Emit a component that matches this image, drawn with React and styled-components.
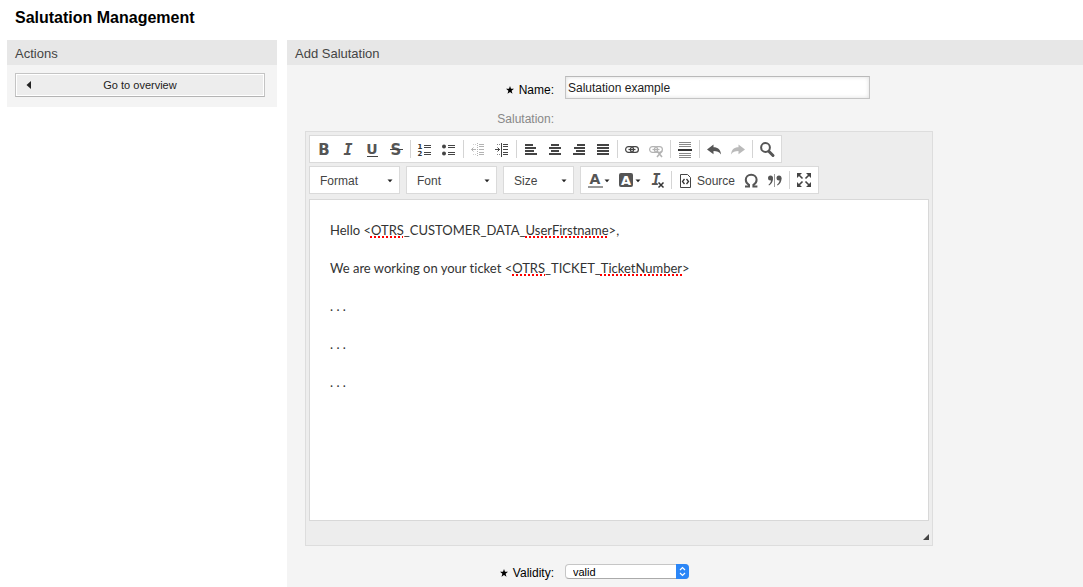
import React from "react";
import styled, { createGlobalStyle, css } from "styled-components";

const GlobalStyle = createGlobalStyle`
  *, *::before, *::after { box-sizing: border-box; }
  body {
    margin: 0;
    background: #fff;
    color: #000;
    font: 12px/16px "Liberation Sans", Arial, sans-serif;
  }
  button, input, select { font: inherit; color: inherit; margin: 0; }
`;

const Page = styled.div`
  min-height: 100vh;
  padding: 8px 0 0 7px;
  display: flex;
  flex-direction: column;
`;

const Title = styled.h1`
  margin: 0;
  padding: 0 8px;
  height: 32px;
  font-size: 16px;
  line-height: 20px;
  font-weight: bold;
`;

const Columns = styled.div`
  flex: 1;
  display: flex;
  align-items: stretch;
  gap: 10px;
`;

const Sidebar = styled.aside`
  flex: 0 0 270px;
`;

const Main = styled.main`
  flex: 1;
  min-width: 0;
  background: #f4f4f4;
`;

const PanelTitle = styled.h2`
  margin: 0;
  padding: 3px 8px 0;
  background: #e7e7e7;
  color: #444;
  font-size: 13px;
  line-height: 22px;
  font-weight: normal;
`;

const ActionBox = styled.div`
  padding: 8px 12px 10px 8px;
  background: #f4f4f4;
`;

const ActionButton = styled.button`
  display: flex;
  align-items: center;
  width: 100%;
  height: 24px;
  padding: 0 10px;
  border: 1px solid #c4c4c4;
  border-bottom-color: #b4b4b4;
  background: #ededed;
  box-shadow: inset 0 0 0 1px #fff;
  color: #222;
  font-size: 11px;

  svg { margin-right: -6px; }
  span { flex: 1; }
`;

const Form = styled.form`
  padding: 11px 18px 8px 0;
`;

const Row = styled.div`
  display: grid;
  grid-template-columns: 267px minmax(0, 305px);
  column-gap: 11px;
  align-items: ${(p) => p.$align || "center"};
  min-height: ${(p) => p.$height}px;
`;

const Label = styled.label`
  display: flex;
  justify-content: flex-end;
  align-items: center;
  gap: 5px;
  padding-top: ${(p) => p.$drop || 0}px;
  color: ${(p) => (p.$muted ? "#888" : "#000")};
`;

const TextInput = styled.input`
  width: 100%;
  height: 23px;
  padding: 0 2px;
  border: 1px solid #c4c4c4;
  border-top-color: #b9b9b9;
  background: #fff;
  box-shadow: inset 0 0 4px #ddd;
  color: #222;
`;

const SelectBox = styled.span`
  position: relative;
  display: block;
  width: 124px;

  svg {
    position: absolute;
    top: 0;
    right: 0;
    pointer-events: none;
  }
`;

const Select = styled.select`
  display: block;
  width: 100%;
  height: 15px;
  padding: 0 16px 0 7px;
  appearance: none;
  border: 1px solid #c6c6c6;
  border-bottom-color: #aaa;
  border-radius: 4px;
  background: #fff;
  font-size: 11px;
  line-height: 12px;
`;

const Editor = styled.section`
  max-width: 628px;
  margin: 2px 0 18px 18px;
  padding: 3px;
  border: 1px solid #ddd;
  background: #ededed;
`;

const ToolRow = styled.div`
  display: flex;
  flex-wrap: wrap;
  gap: 6px;
  margin-bottom: ${(p) => (p.$last ? 5 : 3)}px;
`;

const ToolGroup = styled.div`
  display: flex;
  align-items: center;
  height: 28px;
  padding: 0 2px;
  border: 1px solid #dadada;
  background: #fff;
`;

const ToolButton = styled.button`
  display: flex;
  align-items: center;
  gap: ${(p) => (p.$wide ? 3 : 1)}px;
  height: 24px;
  padding: 1px 4px 0;
  border: 0;
  background: none;
  color: #444;

  ${(p) => p.disabled && css`opacity: 0.4;`}
`;

const Separator = styled.span`
  width: 1px;
  height: 18px;
  margin: 0 2px;
  background: #d4d4d4;
`;

const Combo = styled.button`
  display: flex;
  align-items: center;
  justify-content: space-between;
  width: ${(p) => p.$width}px;
  height: 28px;
  padding: 1px 6px 0 10px;
  border: 1px solid #dadada;
  background: #fff;
  color: #444;
`;

const Content = styled.div`
  height: 322px;
  padding: 21px 20px;
  border: 1px solid #d8d8d8;
  background: #fff;
  color: #333;
  font: 13px/19px Lato, sans-serif;
  font-variant-ligatures: none;
  outline: none;

  p { margin: 0 0 19px; }
`;

const Misspelled = styled.span`
  text-decoration: underline dotted #f00 2px;
  text-decoration-skip-ink: none;
  text-underline-offset: 1px;
`;

const EditorFooter = styled.div`
  display: flex;
  justify-content: flex-end;
  align-items: flex-end;
  height: 21px;
  padding-bottom: 2px;
`;

const Icon = styled.svg`
  flex: none;
  overflow: visible;
`;

const Glyph = ({ children }) => (
  <Icon width="16" height="16" viewBox="0 0 16 16" fill="#444" aria-hidden="true">
    {children}
  </Icon>
);

const Letter = ({ children, x = 8, y = 13, size = 15, color = "#555", italic, family = "DejaVu Sans" }) => (
  <text
    x={x}
    y={y}
    fontSize={size}
    fontWeight="bold"
    fontStyle={italic ? "italic" : "normal"}
    fontFamily={`"${family}", sans-serif`}
    textAnchor="middle"
    fill={color}
  >
    {children}
  </text>
);

const Lines = ({ rows, h = 2 }) => rows.map(([x, y, w]) => <rect key={y} x={x} y={y} width={w} height={h} />);

const Caret = () => (
  <Icon width="6" height="16" viewBox="0 0 6 16" aria-hidden="true">
    <path d="M0.500 6.500h5L3 9.300z" fill="#222" />
  </Icon>
);

const Star = () => (
  <svg width="8" height="8" viewBox="0 0 8 8" aria-hidden="true">
    <path d="M4 0l1 2.800h3L5.600 4.700l.9 3.100L4 6 1.500 7.800l.9-3.100L0 2.800h3z" />
  </svg>
);

const ChainShape = () => (
  <g fill="none" stroke="#444" strokeWidth="1.200">
    <rect x="1.600" y="4.600" width="8" height="5.800" rx="2.900" />
    <rect x="6.400" y="4.600" width="8" height="5.800" rx="2.900" />
    <path d="M4.500 7.500h7" />
  </g>
);

const ArrowBack = () => <path d="M1 7.500L7.500 2.500v2.800c4.500 0 7 2.200 7.500 7.200-1.800-2.500-4-3.400-7.500-3.400v3.200z" fill="#555" />;

const IndentShape = ({ out }) => (
  <>
    <Lines h={1} rows={[[9, 2, 5], [9, 4, 5], [9, 7, 5], [9, 10, 5], [9, 12, 5]]} />
    <path d="M7.500 1v14" stroke="#444" strokeDasharray={out ? "1 1" : "none"} />
    <path d="M3 2.500h3M3 12.500h3" stroke="#888" strokeDasharray="1 1" />
    <path d={out ? "M6 7.500H1.500M3.500 5.500l-2 2 2 2" : "M1 7.500h5M3.500 5.500l2 2-2 2"} fill="none" stroke="#444" />
  </>
);

const icons = {
  bold: <Letter>B</Letter>,
  italic: <Letter italic family="DejaVu Sans Mono">I</Letter>,
  underline: (
    <>
      <Letter y={12} size={14}>U</Letter>
      <rect x="3" y="14" width="11" height="1" />
    </>
  ),
  strike: (
    <>
      <Letter>S</Letter>
      <rect x="2" y="7" width="13" height="1" />
    </>
  ),
  numbers: (
    <>
      <Letter x={3} y={7} size={7} color="#333">1</Letter>
      <Letter x={3} y={14} size={7} color="#333">2</Letter>
      <Lines h={1} rows={[[7, 3, 7], [7, 5, 7], [7, 10, 7], [7, 12, 7]]} />
    </>
  ),
  bullets: (
    <>
      <circle cx="3" cy="4.500" r="2" />
      <circle cx="3" cy="11.500" r="2" />
      <Lines h={1} rows={[[7, 3, 7], [7, 5, 7], [7, 10, 7], [7, 12, 7]]} />
    </>
  ),
  outdent: <IndentShape out />,
  indent: <IndentShape />,
  left: <Lines rows={[[2, 2, 8], [2, 5, 11], [2, 8, 9], [2, 11, 12]]} />,
  center: <Lines rows={[[4, 2, 8], [2, 5, 12], [4, 8, 8], [2, 11, 12]]} />,
  right: <Lines rows={[[6, 2, 8], [3, 5, 11], [5, 8, 9], [2, 11, 12]]} />,
  justify: <Lines rows={[[2, 2, 12], [2, 5, 12], [2, 8, 12], [2, 11, 12]]} />,
  link: <ChainShape />,
  unlink: (
    <>
      <ChainShape />
      <path d="M9 9l5 6M14 9l-5 6" stroke="#444" strokeWidth="1.600" />
    </>
  ),
  rule: (
    <>
      <g fill="#888">
        <Lines h={1} rows={[[2, 0, 12], [2, 2, 12], [2, 4, 12], [2, 11, 12], [2, 13, 12], [2, 15, 12]]} />
      </g>
      <rect x="1" y="7" width="14" height="2" fill="#333" />
    </>
  ),
  undo: <ArrowBack />,
  redo: <g transform="matrix(-1 0 0 1 16 0)"><ArrowBack /></g>,
  find: (
    <g fill="none" stroke="#555">
      <circle cx="6.500" cy="5.500" r="4.400" strokeWidth="2" />
      <path d="M10 9.500l4 4" strokeWidth="3" strokeLinecap="round" />
    </g>
  ),
  textColor: (
    <>
      <Letter y={11} size={14}>A</Letter>
      <rect x="1" y="13" width="15" height="2" fill="#999" />
    </>
  ),
  bgColor: (
    <>
      <rect x="1" y="0" width="14" height="14" rx="2" fill="#555" />
      <Letter y={12} size={13} color="#fff">A</Letter>
    </>
  ),
  clear: (
    <>
      <Letter x={7} y={12} italic size={15} family="DejaVu Sans Mono">I</Letter>
      <path d="M9.500 9.500l5 5M14.500 9.500l-5 5" stroke="#fff" strokeWidth="3.500" />
      <path d="M9.500 9.500l5 5M14.500 9.500l-5 5" stroke="#333" strokeWidth="1.500" />
    </>
  ),
  source: (
    <>
      <path d="M2.500 1.500h7l3 3v10h-10z" fill="none" stroke="#444" />
      <path d="M6.500 6l-2 2.500 2 2.500M8.500 6l2 2.500-2 2.500" fill="none" stroke="#333" strokeWidth="1.300" />
    </>
  ),
  omega: (
    <path
      d="M2 13.500h4v-1.700C3.800 10.700 2.800 9 2.800 6.800 2.800 3.800 5 1.800 8.200 1.800s5.400 2 5.400 5c0 2.200-1 3.900-3.200 5v1.700h4"
      fill="none"
      stroke="#555"
      strokeWidth="2"
    />
  ),
  quote: (
    <g fill="#555">
      <circle cx="3.500" cy="5" r="2.500" />
      <path d="M6 5c0 4-1.500 6-4 7.500l-.5-.8C3.500 10 4 8.500 4 7z" />
      <rect x="7" y="1" width="1" height="13" fill="#999" />
      <circle cx="12" cy="5" r="2.500" />
      <path d="M14.500 5c0 4-1.500 6-4 7.500l-.5-.8c2-1.700 2.500-3.200 2.500-4.700z" />
    </g>
  ),
  maximize: (
    <>
      <path d="M1 0h5L1 5zM15 0h-5l5 5zM1 14h5l-5-5zM15 14h-5l5-5z" />
      <path d="M3 2l3.500 3.500M13 2L9.500 5.500M3 12l3.500-3.500M13 12L9.500 8.500" stroke="#444" strokeWidth="1.600" />
    </>
  ),
};

const Tool = ({ icon, label, menu, text, disabled }) => (
  <ToolButton type="button" aria-label={label} disabled={disabled} $wide={!!text}>
    <Glyph>{icons[icon]}</Glyph>
    {text}
    {menu && <Caret />}
  </ToolButton>
);

const mainTools = [
  [["bold", "Bold"], ["italic", "Italic"], ["underline", "Underline"], ["strike", "Strikethrough"]],
  [["numbers", "Numbered list"], ["bullets", "Bulleted list"]],
  [["outdent", "Decrease indent", true], ["indent", "Increase indent"]],
  [["left", "Align left"], ["center", "Center"], ["right", "Align right"], ["justify", "Justify"]],
  [["link", "Link"], ["unlink", "Unlink", true]],
  [["rule", "Horizontal line"]],
  [["undo", "Undo"], ["redo", "Redo", true]],
  [["find", "Find"]],
];

const combos = [["Format", 91], ["Font", 91], ["Size", 71]];

export default function App() {
  return (
    <Page>
      <GlobalStyle />
      <Title>Salutation Management</Title>
      <Columns>
        <Sidebar>
          <PanelTitle>Actions</PanelTitle>
          <ActionBox>
            <ActionButton type="button">
              <svg width="6" height="8" viewBox="0 0 6 8" aria-hidden="true">
                <path d="M5 0v8L0.500 4z" fill="#222" />
              </svg>
              <span>Go to overview</span>
            </ActionButton>
          </ActionBox>
        </Sidebar>
        <Main>
          <PanelTitle>Add Salutation</PanelTitle>
          <Form onSubmit={(e) => e.preventDefault()}>
            <Row $height={33} $align="start">
              <Label htmlFor="name" $drop={6}><Star /> Name:</Label>
              <TextInput id="name" defaultValue="Salutation example" />
            </Row>
            <Row $height={20}>
              <Label as="span" id="salutation-label" $muted>Salutation:</Label>
            </Row>
            <Editor>
              <ToolRow>
                <ToolGroup>
                  {mainTools.map((group, i) => (
                    <React.Fragment key={i}>
                      {i > 0 && <Separator />}
                      {group.map(([icon, label, disabled]) => (
                        <Tool key={icon} icon={icon} label={label} disabled={disabled} />
                      ))}
                    </React.Fragment>
                  ))}
                </ToolGroup>
              </ToolRow>
              <ToolRow $last>
                {combos.map(([name, width]) => (
                  <Combo key={name} type="button" $width={width}>{name}<Caret /></Combo>
                ))}
                <ToolGroup>
                  <Tool icon="textColor" label="Text color" menu />
                  <Tool icon="bgColor" label="Background color" menu />
                  <Tool icon="clear" label="Remove format" />
                  <Separator />
                  <Tool icon="source" text="Source" />
                  <Tool icon="omega" label="Special character" />
                  <Tool icon="quote" label="Quote" />
                  <Separator />
                  <Tool icon="maximize" label="Maximize" />
                </ToolGroup>
              </ToolRow>
              <Content
                role="textbox"
                aria-multiline="true"
                aria-labelledby="salutation-label"
                contentEditable
                suppressContentEditableWarning
                spellCheck={false}
              >
                <p>Hello &lt;<Misspelled>OTRS</Misspelled>_CUSTOMER_DATA_<Misspelled>UserFirstname</Misspelled>&gt;,</p>
                <p>We are working on your ticket &lt;<Misspelled>OTRS</Misspelled>_TICKET_<Misspelled>TicketNumber</Misspelled>&gt;</p>
                <p>. . .</p>
                <p>. . .</p>
                <p>. . .</p>
              </Content>
              <EditorFooter>
                <svg width="6" height="6" viewBox="0 0 6 6" aria-hidden="true">
                  <path d="M6 0v6H0z" fill="#444" />
                </svg>
              </EditorFooter>
            </Editor>
            <Row $height={15} $align="start">
              <Label htmlFor="validity" $drop={1}><Star /> Validity:</Label>
              <SelectBox>
                <Select id="validity" defaultValue="valid">
                  <option>valid</option>
                  <option>invalid</option>
                </Select>
                <svg width="13" height="15" viewBox="0 0 13 15" aria-hidden="true">
                  <path d="M0 0h9a4 4 0 0 1 4 4v7a4 4 0 0 1-4 4H0z" fill="#2b86f7" />
                  <path d="M4 6l2.500-2.500L9 6M4 9l2.500 2.500L9 9" fill="none" stroke="#fff" strokeWidth="1.200" />
                </svg>
              </SelectBox>
            </Row>
          </Form>
        </Main>
      </Columns>
    </Page>
  );
}
